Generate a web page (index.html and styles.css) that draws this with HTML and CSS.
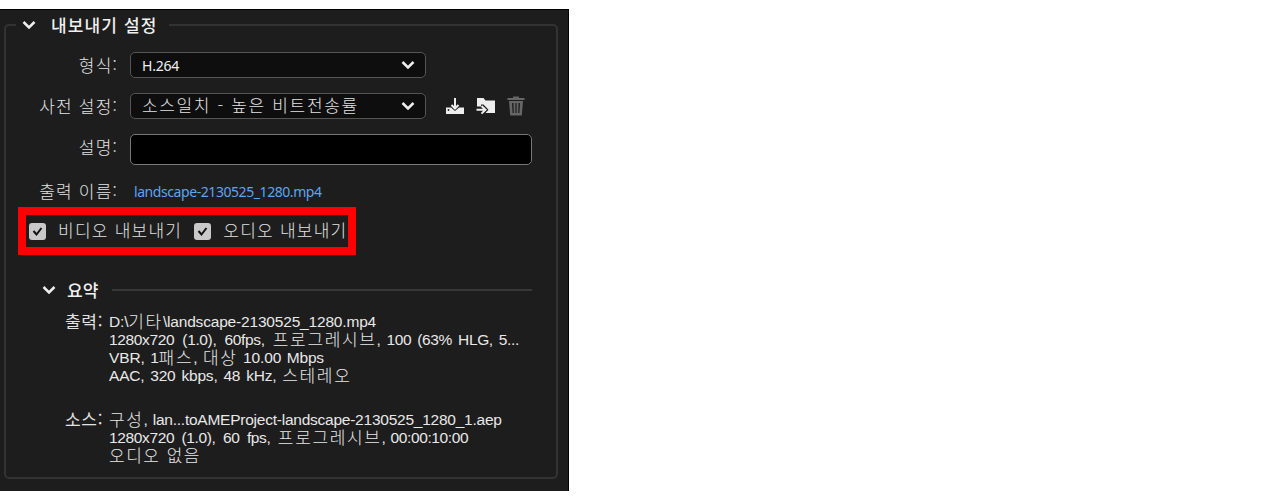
FILE: index.html
```html
<!DOCTYPE html>
<html lang="ko">
    <head>
        <meta charset="utf-8">
        <title>내보내기 설정</title>
        <link rel="stylesheet" href="styles.css">
    </head>
    <body>
        <div class="panel">
            <fieldset class="settings">
                <legend class="title">
                    <svg class="chevron" width="14" height="10" viewBox="0 0 14 10"><path d="M1.5 2 L7 7.5 L12.5 2"/></svg>
                    <span class="text">내보내기 설정</span>
                </legend>

                <div class="row format">
                    <label>형식:</label>
                    <div class="select">
                        <span class="latin">H.264</span>
                        <svg class="chevron" width="14" height="10" viewBox="0 0 14 10"><path d="M1.5 2 L7 7.5 L12.5 2"/></svg>
                    </div>
                </div>

                <div class="row preset">
                    <label>사전 설정:</label>
                    <div class="select">
                        <span class="wide">소스일치 - 높은 비트전송률</span>
                        <svg class="chevron" width="14" height="10" viewBox="0 0 14 10"><path d="M1.5 2 L7 7.5 L12.5 2"/></svg>
                    </div>
                    <div class="tools">
                        <svg width="20" height="18" viewBox="0 0 20 18">
                            <path class="fill" d="M1 10.5 H6 L10 14 L14 10.5 H19 V17 H1 Z"/>
                            <path class="line" d="M10 1 V11 M6.5 8 L10 11.5 L13.5 8"/>
                            <circle class="dot" cx="3.5" cy="13" r="0.9"/>
                        </svg>
                        <svg width="20" height="18" viewBox="0 0 20 18">
                            <path class="fill" d="M1 1 H7.5 L9.5 3.5 H19 V16 H9.5 L12.5 12.8 L7.5 7.5 H5 V9.5 H1 Z"/>
                            <path class="line" d="M0.5 12.8 H8.5 M5.500 9 L9.5 12.8 L5.5 16.6"/>
                        </svg>
                        <svg class="trash" width="18" height="20" viewBox="0 0 18 20">
                            <path class="fill" fill-rule="evenodd" d="M0.5 2 H6 V0.5 H12 V2 H17.5 V4 H0.5 Z M2 5 H16 L14.8 19.5 H3.2 Z M5 7 L5.6 17 H6.8 L6.4 7 Z M8.4 7 V17 H9.6 V7 Z M11.6 7 L11.2 17 H12.4 L13 7 Z"/>
                        </svg>
                    </div>
                </div>

                <div class="row comment">
                    <label>설명:</label>
                    <div class="input"></div>
                </div>

                <div class="row output-name">
                    <label>출력 이름:</label>
                    <a class="link">landscape-2130525_1280.mp4</a>
                </div>

                <div class="checks">
                    <svg class="box" width="17" height="17" viewBox="0 0 17 17"><rect width="17" height="17" rx="3"/><path d="M4.5 8 L7.5 11.5 L12.5 5"/></svg>
                    <span class="text">비디오 내보내기</span>
                    <svg class="box" width="17" height="17" viewBox="0 0 17 17"><rect width="17" height="17" rx="3"/><path d="M4.5 8 L7.5 11.5 L12.5 5"/></svg>
                    <span class="text">오디오 내보내기</span>
                </div>

                <div class="summary-head">
                    <svg class="chevron" width="14" height="10" viewBox="0 0 14 10"><path d="M1.5 2 L7 7.5 L12.5 2"/></svg>
                    <span class="text">요약</span>
                    <div class="rule"></div>
                </div>

                <div class="summary out">
                    <div class="name">출력:</div>
                    <div class="lines">
                        <p class="path">D:\<span class="ko">기타</span>\landscape-2130525_1280.mp4</p>
                        <p class="size">1280x720 (1.0), 60fps, <span class="ko">프로그레시브</span><span class="color">, 100 (63% HLG, 5...</span></p>
                        <p class="rate">VBR, 1<span class="ko">패스</span>, <span class="ko">대상</span> 10.00 Mbps</p>
                        <p class="audio">AAC, 320 kbps, 48 kHz, <span class="ko">스테레오</span></p>
                    </div>
                </div>

                <div class="summary src">
                    <div class="name">소스:</div>
                    <div class="lines">
                        <p class="comp"><span class="ko">구성</span>, lan...toAMEProject-landscape-2130525_1280_1.aep</p>
                        <p class="size src-size">1280x720 (1.0), 60 fps, <span class="ko">프로그레시브</span><span class="time">, 00:00:10:00</span></p>
                        <p><span class="ko none">오디오 없음</span></p>
                    </div>
                </div>
            </fieldset>
        </div>
    </body>
</html>
```

FILE: styles.css
```css
* {
    box-sizing: border-box;
}
body {
    margin: 0;
    padding-top: 9px;
    background: #fff;
    font-family: "Noto Sans CJK KR", sans-serif;
    font-weight: 300;
    font-size: 17px;
    color: #e2e2e2;
}
.panel {
    width: 569px;
    height: 482px;
    padding: 4px 10px 12px 4px;
    background: #1d1d1d;
    border-top: 1px solid #000;
    border-right: 1px solid #000;
}
.settings {
    height: 465px;
    margin: 0;
    padding: 0;
    border: 2px solid #333;
    border-radius: 5px;
}
.title {
    display: flex;
    align-items: center;
    height: 22px;
    margin-left: 10px;
    padding: 0 11px 0 6px;
    font-weight: 500;
    line-height: 20px;
    letter-spacing: 1.15px;
    color: #f0f0f0;
}
.title .text {
    margin: 0 0 0 15px;
}
.chevron {
    flex: none;
}
.chevron path {
    fill: none;
    stroke: #eee;
    stroke-width: 2.5;
}
.row {
    display: flex;
    align-items: center;
}
.row label {
    width: 112px;
    margin: 0 12px 0 0;
    text-align: right;
    line-height: 24px;
    letter-spacing: 1.2px;
}
.select {
    display: flex;
    align-items: center;
    justify-content: space-between;
    width: 296px;
    height: 26px;
    padding: 0 10px 0 11px;
    background: #0e0e0e;
    border: 1px solid #555;
    border-radius: 5px;
    line-height: 24px;
}
.wide {
    margin-top: -3px;
    letter-spacing: 1.65px;
}
.latin {
    margin-top: 1px;
    font: 400 14px "Noto Sans", sans-serif;
    letter-spacing: -0.2px;
    color: #eee;
}
.format {
    height: 26px;
    margin-top: 16px;
}
.preset {
    height: 26px;
    margin-top: 15px;
}
.tools {
    display: flex;
    align-items: center;
    gap: 11px;
    margin-left: 19px;
}
.fill {
    fill: #eee;
}
.line {
    fill: none;
    stroke: #eee;
    stroke-width: 2;
}
.dot {
    fill: #1d1d1d;
}
.trash .fill {
    fill: #666;
}
.comment {
    height: 31px;
    margin-top: 15px;
}
.comment label {
    margin-top: -6px;
}
.input {
    width: 402px;
    height: 31px;
    background: #000;
    border: 1px solid #777;
    border-radius: 5px;
}
.output-name {
    height: 24px;
    margin-top: 14px;
}
.link {
    margin-left: 4px;
    font: 400 14px "Noto Sans", sans-serif;
    letter-spacing: -0.43px;
    color: #5ea4ef;
}
.checks {
    display: flex;
    align-items: center;
    width: 338px;
    height: 48px;
    margin: 4px 0 0 12px;
    padding-left: 3px;
    border: 8px solid #f00;
    line-height: 24px;
    letter-spacing: 1.25px;
    white-space: nowrap;
}
.box {
    flex: none;
}
.box rect {
    fill: #c9c9c9;
}
.box path {
    fill: none;
    stroke: #111;
    stroke-width: 2;
}
.checks .text {
    margin: -3px 12px 0;
}
.summary-head {
    display: flex;
    align-items: center;
    width: 490px;
    height: 24px;
    margin: 23px 0 0 36px;
    font-weight: 500;
    color: #f0f0f0;
}
.summary-head .text {
    margin: -1px 0 0 11px;
}
.rule {
    flex: 1;
    height: 2px;
    margin-left: 14px;
    background: #383838;
}
.summary {
    display: flex;
    line-height: 18px;
}
.out {
    margin-top: 11px;
}
.src {
    margin-top: 26px;
}
.name {
    width: 44px;
    margin: -1px 0 0 59px;
    font-weight: 400;
    letter-spacing: 0.7px;
}
.lines {
    font: 400 15.5px/18px "Liberation Sans", "Noto Sans CJK KR", sans-serif;
    color: #e8e8e8;
}
.lines p {
    height: 18px;
    margin: 0;
    white-space: nowrap;
}
.ko {
    font: 300 17px/0 "Noto Sans CJK KR", sans-serif;
    letter-spacing: 1.65px;
    word-spacing: 0;
    vertical-align: -1px;
}

/* every line has its own tracking */
.path {
    letter-spacing: -0.18px;
}
.size {
    letter-spacing: -0.37px;
    word-spacing: 4.3px;
}
.color {
    word-spacing: 2.1px;
}
.rate {
    letter-spacing: -0.15px;
    word-spacing: 1.4px;
}
.audio {
    letter-spacing: -0.2px;
    word-spacing: 1.8px;
}
.comp {
    letter-spacing: -0.24px;
    word-spacing: 1px;
}
.src-size {
    word-spacing: 3.5px;
}
.time {
    word-spacing: 1px;
}
.none {
    letter-spacing: 1.5px;
}
```
